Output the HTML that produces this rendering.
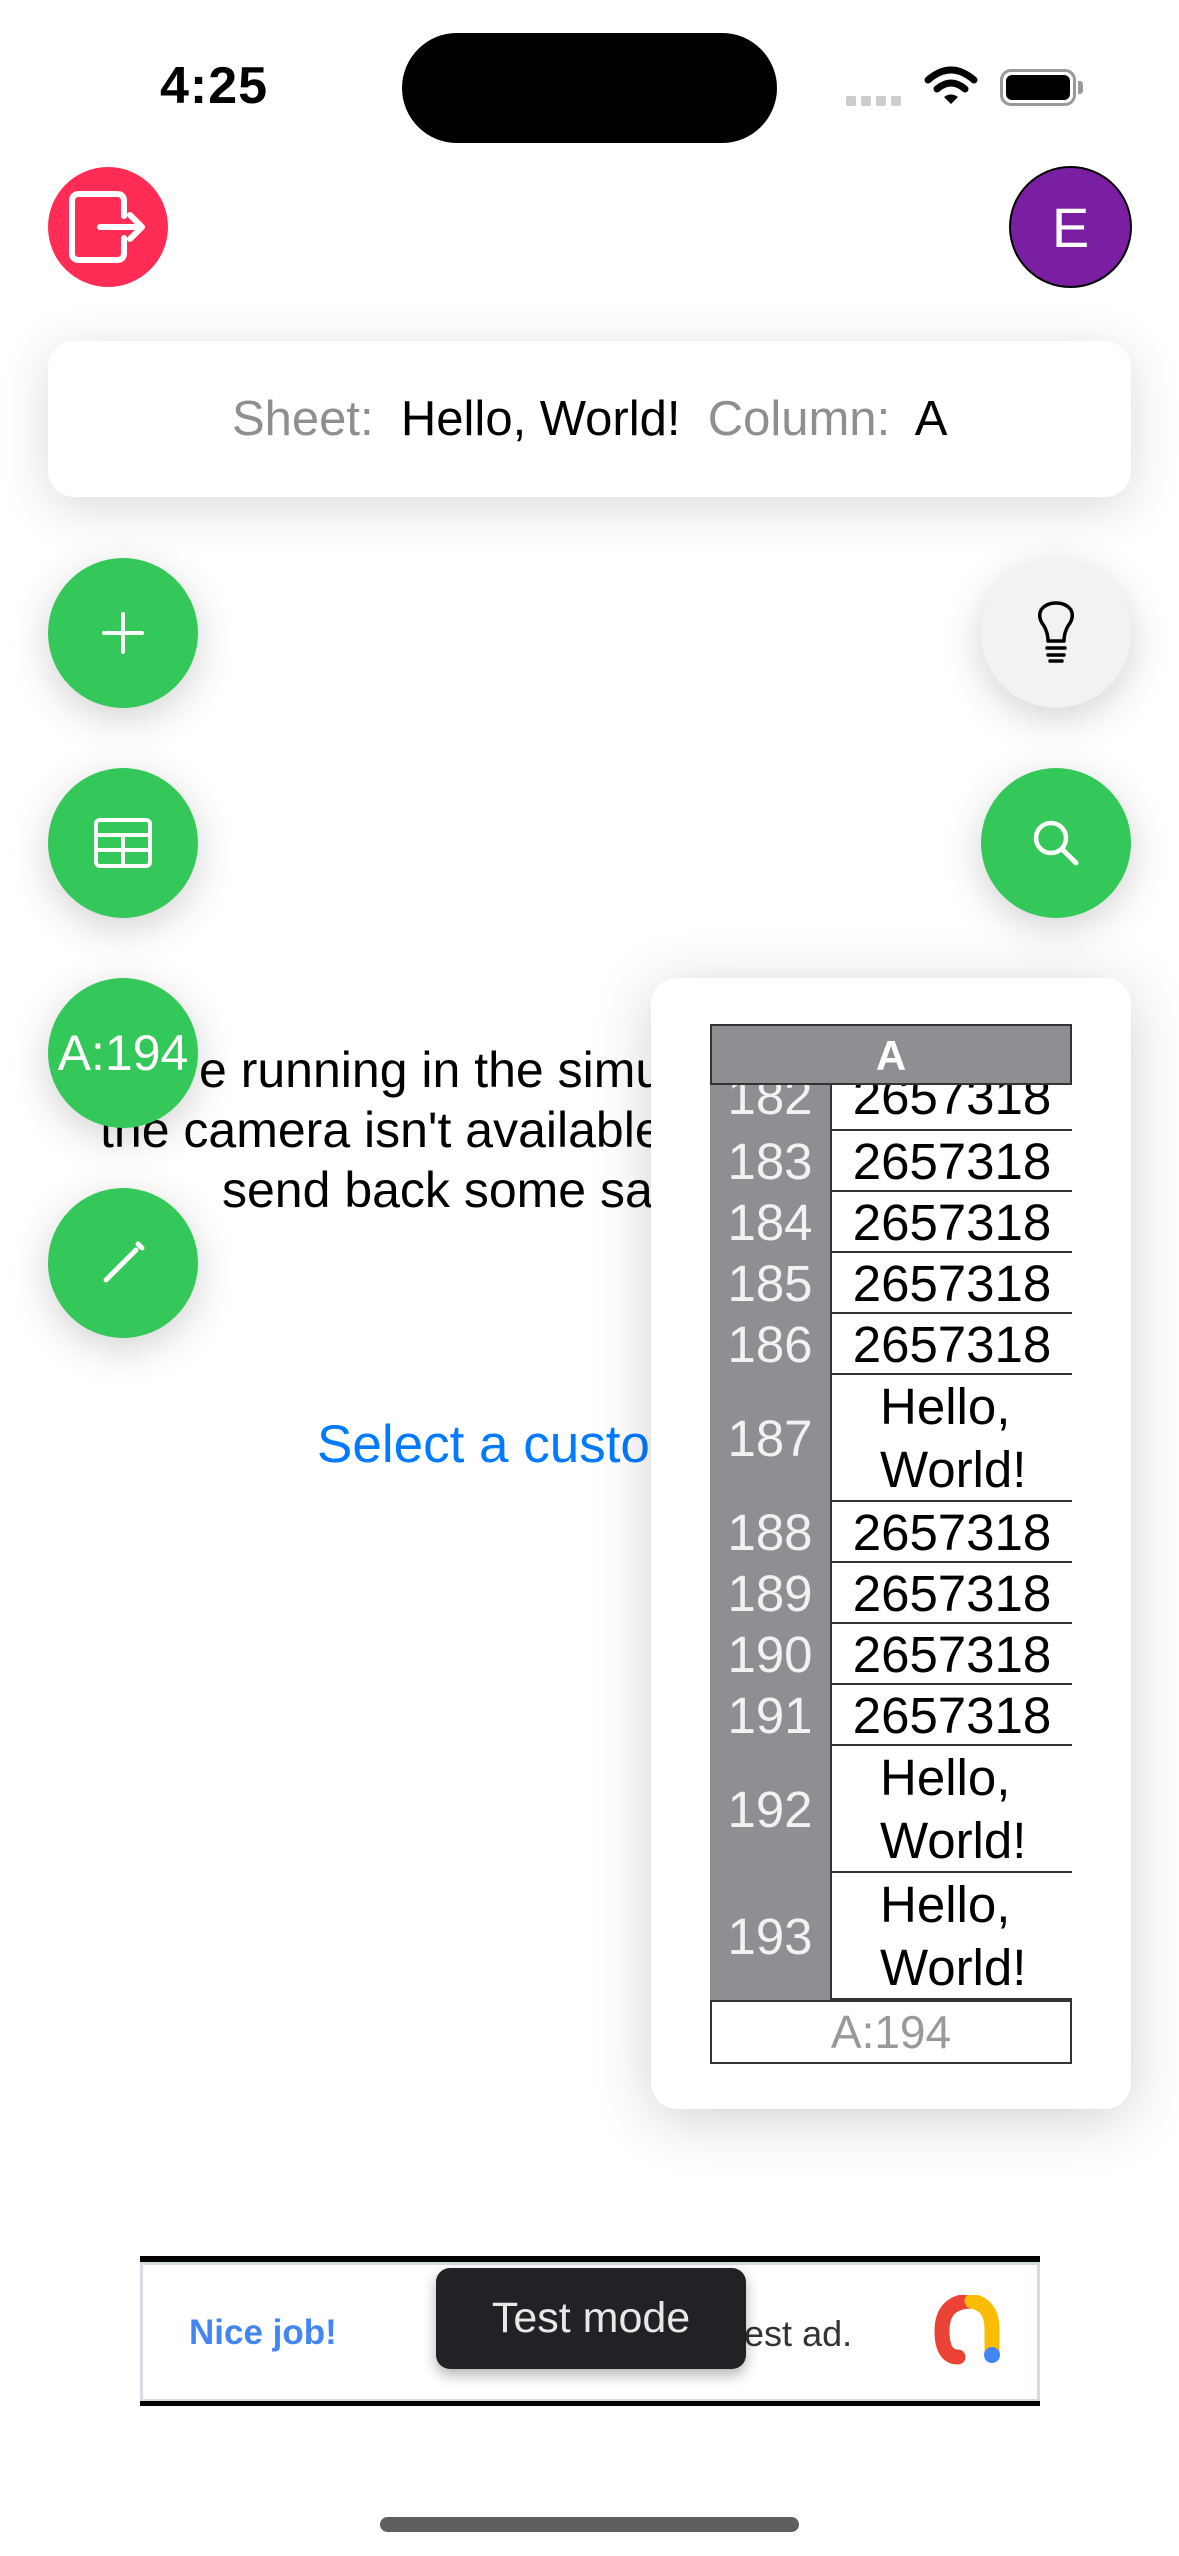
<!DOCTYPE html>
<html><head><meta charset="utf-8"><style>
*{margin:0;padding:0;box-sizing:border-box}
body{width:1179px;height:2556px;background:#fff;position:relative;overflow:hidden;font-family:"Liberation Sans",sans-serif}
.abs{position:absolute}
.btn{position:absolute;width:150px;height:150px;border-radius:50%;background:#34c759;box-shadow:0 10px 40px rgba(0,0,0,0.18);display:flex;align-items:center;justify-content:center}
.line{position:absolute;font-size:50px;color:#000;white-space:nowrap;line-height:60px}
.r{position:absolute;left:710px;width:362px;font-size:51px}
.r .n{position:absolute;left:0;width:120px;text-align:center;color:#f2f2f2}
.r .v{position:absolute;left:122px;width:240px;text-align:center;color:#000;border-bottom:2px solid #333;height:100%}
.r .v2{text-align:left;padding-left:48px;line-height:63px}
</style></head><body>
<div class="abs" style="left:160px;top:56px;font-size:52px;font-weight:bold;letter-spacing:1px">4:25</div>
<div class="abs" style="left:402px;top:33px;width:375px;height:110px;background:#000;border-radius:55px"></div>
<div class="abs" style="left:846px;top:96px;width:56px;height:10px;display:flex;gap:5px">
<div style="width:10px;height:10px;background:#ccc;border-radius:2px"></div><div style="width:10px;height:10px;background:#ccc;border-radius:2px"></div><div style="width:10px;height:10px;background:#ccc;border-radius:2px"></div><div style="width:10px;height:10px;background:#ccc;border-radius:2px"></div></div>
<svg class="abs" style="left:924px;top:66px" width="54" height="42" viewBox="0 0 54 42"><path d="M4 14 Q27 -6 50 14" stroke="#000" stroke-width="7" fill="none" stroke-linecap="round"/><path d="M13 23 Q27 11 41 23" stroke="#000" stroke-width="7" fill="none" stroke-linecap="round"/><path d="M20 31 L27 38 L34 31 Q27 26 20 31Z" fill="#000"/></svg>
<div class="abs" style="left:1000px;top:69px;width:76px;height:37px;border:3px solid #999;border-radius:11px;padding:3px"><div style="width:100%;height:100%;background:#000;border-radius:6px"></div></div>
<div class="abs" style="left:1078px;top:81px;width:5px;height:13px;background:#999;border-radius:0 3px 3px 0"></div>

<div class="abs" style="left:48px;top:167px;width:120px;height:120px;border-radius:50%;background:#ff2d55"></div>
<svg class="abs" style="left:48px;top:167px" width="120" height="120" viewBox="0 0 120 120"><path d="M76 49 V34 Q76 27 69 27 H31 Q24 27 24 34 V86 Q24 93 31 93 H69 Q76 93 76 86 V71" stroke="#fff" stroke-width="6" fill="none" stroke-linecap="round"/><path d="M52 60 H94 M82 48 L94 60 L82 72" stroke="#fff" stroke-width="6" fill="none" stroke-linecap="round" stroke-linejoin="round"/></svg>
<div class="abs" style="left:1009px;top:166px;width:123px;height:122px;border-radius:50%;background:#7b1fa2;border:2px solid #000;color:#fff;font-size:56px;display:flex;align-items:center;justify-content:center">E</div>

<div class="abs" style="left:48px;top:341px;width:1083px;height:156px;background:#fff;border-radius:26px;box-shadow:0 10px 50px rgba(0,0,0,0.15)"></div>
<div class="abs" style="left:232px;top:390px;font-size:49px;white-space:nowrap;line-height:58px"><span style="color:#8e8e93">Sheet:</span>&nbsp; <span>Hello, World!</span>&nbsp; <span style="color:#8e8e93">Column:</span>&nbsp; <span>A</span></div>

<div class="abs" style="left:0;top:1000px;width:651px;height:500px;overflow:hidden">
<div class="line" style="left:199px;top:40px">e running in the simulator, which means</div>
<div class="line" style="left:100px;top:100px">the camera isn't available. The image picker will</div>
<div class="line" style="left:222px;top:160px">send back some sample images.</div>
<div class="abs" style="left:317px;top:414px;font-size:53px;color:#007aff;white-space:nowrap">Select a custom image</div>
</div>

<div class="btn" style="left:48px;top:558px"><svg width="50" height="50" viewBox="0 0 50 50"><path d="M25 6V44M6 25H44" stroke="#fff" stroke-width="4" stroke-linecap="round"/></svg></div>
<div class="btn" style="left:48px;top:768px"><svg width="60" height="52" viewBox="0 0 60 52"><rect x="3" y="3" width="54" height="46" rx="4" stroke="#fff" stroke-width="4" fill="none"/><path d="M3 18H57M3 33H57M30 18V49" stroke="#fff" stroke-width="4"/></svg></div>
<div class="btn" style="left:48px;top:1188px"><svg width="50" height="50" viewBox="0 0 50 50"><path d="M8 42 L38 12" stroke="#fff" stroke-width="5" stroke-linecap="round"/><path d="M40 6 L44 10" stroke="#fff" stroke-width="5" stroke-linecap="round"/></svg></div>
<div class="btn" style="left:981px;top:558px;background:#f2f2f2"><svg width="40" height="64" viewBox="0 0 40 64"><path d="M12 40 Q12 30 6 22 Q2 15 5 9 Q10 2 20 2 Q30 2 35 9 Q38 15 34 22 Q28 30 28 40 Z" stroke="#000" stroke-width="3.5" fill="none" stroke-linejoin="round"/><path d="M11 47H29M12 54H28M14 60H26" stroke="#000" stroke-width="3.5" stroke-linecap="round"/></svg></div>
<div class="btn" style="left:981px;top:768px"><svg width="56" height="56" viewBox="0 0 56 56"><circle cx="23" cy="23" r="15" stroke="#fff" stroke-width="4.5" fill="none"/><path d="M34 34L48 48" stroke="#fff" stroke-width="5" stroke-linecap="round"/></svg></div>

<div class="abs" style="left:651px;top:978px;width:480px;height:1131px;background:#fff;border-radius:26px;box-shadow:0 10px 60px rgba(0,0,0,0.18)"></div>
<div class="abs" style="left:710px;top:1085px;width:362px;height:915px;overflow:hidden;background:#8e8e93">
 <div class="abs" style="left:120px;top:0;width:242px;height:915px;background:#fff;border-left:2px solid #333"></div>
</div>
<div class="r" style="top:1085px;height:46px;overflow:hidden"><div class="n" style="top:-18px;line-height:60px">182</div><div class="v" style="line-height:60px"><span style="position:relative;top:-18px">2657318</span></div></div>
<div class="r" style="top:1131px;height:61px;line-height:62px"><div class="n">183</div><div class="v">2657318</div></div>
<div class="r" style="top:1192px;height:61px;line-height:62px"><div class="n">184</div><div class="v">2657318</div></div>
<div class="r" style="top:1253px;height:61px;line-height:62px"><div class="n">185</div><div class="v">2657318</div></div>
<div class="r" style="top:1314px;height:61px;line-height:62px"><div class="n">186</div><div class="v">2657318</div></div>
<div class="r" style="top:1375px;height:127px"><div class="n" style="line-height:127px">187</div><div class="v v2">Hello,<br>World!</div></div>
<div class="r" style="top:1502px;height:61px;line-height:62px"><div class="n">188</div><div class="v">2657318</div></div>
<div class="r" style="top:1563px;height:61px;line-height:62px"><div class="n">189</div><div class="v">2657318</div></div>
<div class="r" style="top:1624px;height:61px;line-height:62px"><div class="n">190</div><div class="v">2657318</div></div>
<div class="r" style="top:1685px;height:61px;line-height:62px"><div class="n">191</div><div class="v">2657318</div></div>
<div class="r" style="top:1746px;height:127px"><div class="n" style="line-height:127px">192</div><div class="v v2">Hello,<br>World!</div></div>
<div class="r" style="top:1873px;height:127px"><div class="n" style="line-height:127px">193</div><div class="v v2">Hello,<br>World!</div></div>
<div class="abs" style="left:710px;top:1024px;width:362px;height:61px;background:#8e8e93;border:2px solid #333;color:#fff;font-weight:bold;font-size:42px;text-align:center;line-height:60px">A</div>
<div class="abs" style="left:710px;top:2000px;width:362px;height:64px;border:2px solid #333;color:#999;font-size:46px;text-align:center;line-height:60px;background:#fff">A:194</div>

<div class="btn" style="left:48px;top:978px;color:#fff;font-size:50px">A:194</div>

<div class="abs" style="left:140px;top:2256px;width:900px;height:6px;background:#000"></div>
<div class="abs" style="left:140px;top:2262px;width:900px;height:140px;border:3px solid #d3dde2;background:#fff"></div>
<div class="abs" style="left:140px;top:2401px;width:900px;height:5px;background:#000"></div>
<div class="abs" style="left:189px;top:2313px;font-size:35px;color:#4285f4;font-weight:bold">Nice job!</div>
<div class="abs" style="left:590px;top:2313px;font-size:36px;color:#333;white-space:nowrap">This is a test ad.</div>
<svg class="abs" style="left:934px;top:2295px" width="72" height="72" viewBox="0 0 72 72"><path d="M38 6 Q8 6 8 36 Q8 62 24 62" stroke="#ea4335" stroke-width="15" fill="none" stroke-linecap="round"/><path d="M38 6 Q58 10 58 34 V58" stroke="#fbbc04" stroke-width="15" fill="none" stroke-linecap="round"/><circle cx="58" cy="60" r="8" fill="#4285f4"/></svg>
<div class="abs" style="left:436px;top:2268px;width:310px;height:101px;background:#212226;border-radius:14px;box-shadow:0 6px 14px rgba(0,0,0,0.3);color:#e8e8e8;font-size:43px;text-align:center;line-height:100px">Test mode</div>

<div class="abs" style="left:380px;top:2517px;width:419px;height:15px;background:#5f5f5f;border-radius:8px"></div>
</body></html>
